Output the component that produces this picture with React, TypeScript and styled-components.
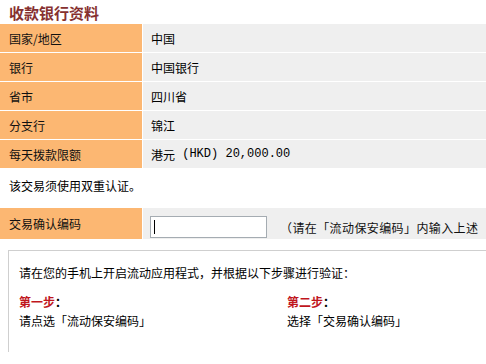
import React from "react";
import styled, { createGlobalStyle } from "styled-components";

const GlobalStyle = createGlobalStyle`
  html, body {
    margin: 0;
    padding: 0;
    overflow: hidden;
    background: #fff;
  }
  body {
    font-family: "Noto Sans CJK SC", "Liberation Sans", sans-serif;
    font-size: 12px;
    color: #000;
  }
`;

const rows = [
  { label: "国家/地区", value: "中国" },
  { label: "银行", value: "中国银行" },
  { label: "省市", value: "四川省" },
  { label: "分支行", value: "锦江" },
];

const App = () => {
  return (
    <>
      <GlobalStyle />
      <Page>
        <Title>收款银行资料</Title>
        <InfoTable>
          {rows.map((row, index) => (
            <React.Fragment key={index}>
              <LabelCell>{row.label}</LabelCell>
              <ValueCell>{row.value}</ValueCell>
            </React.Fragment>
          ))}
          <LabelCell>每天拨款限额</LabelCell>
          <ValueCell>
            港元<Mono> (HKD) 20,000.00</Mono>
          </ValueCell>
        </InfoTable>

        <Notice>该交易须使用双重认证。</Notice>

        <ConfirmRow>
          <LabelCell>交易确认编码</LabelCell>
          <InputCell>
            <CodeInput type="text" />
            <Hint>（请在「流动保安编码」内输入上述</Hint>
          </InputCell>
        </ConfirmRow>

        <StepBox>
          <Intro>请在您的手机上开启流动应用程式，并根据以下步骤进行验证：</Intro>
          <Steps>
            <Step>
              <StepTitle>
                第一步<span>：</span>
              </StepTitle>
              <div>请点选「流动保安编码」</div>
            </Step>
            <Step>
              <StepTitle>
                第二步<span>：</span>
              </StepTitle>
              <div>选择「交易确认编码」</div>
            </Step>
          </Steps>
        </StepBox>
      </Page>
    </>
  );
};

export default App;

const Page = styled.div`
  width: 100%;
  overflow: hidden;
`;

const Title = styled.h2`
  margin: 0;
  height: 24px;
  padding-left: 9px;
  font-size: 15px;
  line-height: 25px;
  font-weight: bold;
  color: #86302f;
`;

const InfoTable = styled.div`
  display: grid;
  grid-template-columns: 142px 1fr;
  grid-auto-rows: 28px;
  column-gap: 1px;
  row-gap: 1px;
  background: #fff;
`;

const LabelCell = styled.div`
  display: flex;
  align-items: center;
  padding-left: 9px;
  background: #fcb772;
  color: #111;
`;

const ValueCell = styled.div`
  display: flex;
  align-items: center;
  padding-left: 8px;
  background: #efefef;
  white-space: pre;
`;

const Mono = styled.span`
  font-family: "Liberation Mono", monospace;
  font-size: 12px;
`;

const Notice = styled.div`
  padding: 10px 0 14px 9px;
  line-height: 16px;
`;

const ConfirmRow = styled.div`
  display: grid;
  grid-template-columns: 142px 1fr;
  column-gap: 1px;
  height: 31px;
`;

const InputCell = styled.div`
  display: flex;
  align-items: center;
  min-width: 0;
  overflow: hidden;
  padding: 7px 0 0 7px;
  box-sizing: border-box;
  background: #efefef;
  white-space: nowrap;
`;

const CodeInput = styled.input`
  flex: none;
  box-sizing: border-box;
  width: 117px;
  height: 22px;
  margin: 0;
  padding: 0 3px;
  border: 1px solid #a5acb2;
  border-radius: 0;
  outline: none;
  background: linear-gradient(#000, #000) no-repeat 3px 3px / 1px 14px, #fff;
`;

const Hint = styled.span`
  margin-left: 13px;
  letter-spacing: 0.4px;
  color: #111;
`;

const StepBox = styled.div`
  margin: 11px 0 0 8px;
  height: 102px;
  box-sizing: border-box;
  padding: 12px 0 0 10px;
  border-top: 1px solid #cfcfcf;
  border-left: 1px solid #cfcfcf;
  line-height: 19px;
`;

const Intro = styled.div`
  margin-bottom: 10px;
`;

const Steps = styled.div`
  display: grid;
  grid-template-columns: 268px 1fr;
`;

const Step = styled.div`
  display: flex;
  flex-direction: column;
`;

const StepTitle = styled.div`
  font-weight: bold;
  color: #c0161d;

  span {
    color: #000;
  }
`;
